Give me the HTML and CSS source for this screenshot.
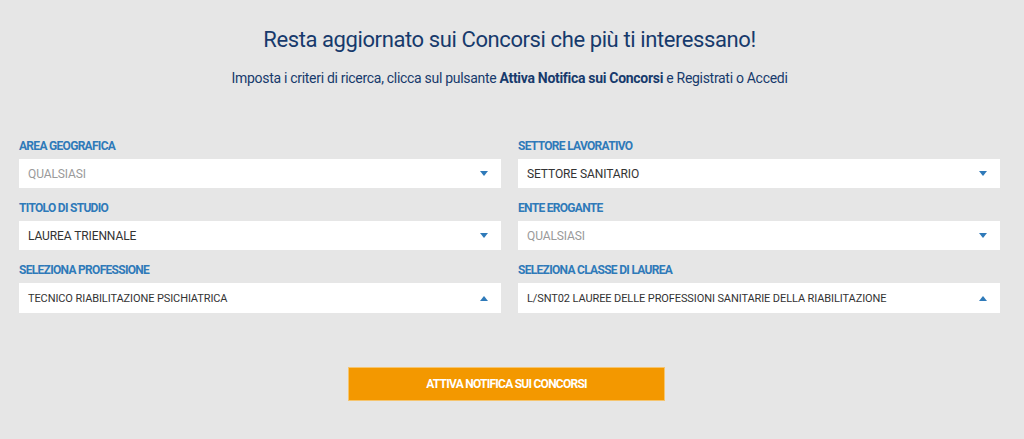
FILE: index.html
```html
<!DOCTYPE html>
<html lang="it">
<head>
<meta charset="utf-8">
<title>Notifiche Concorsi</title>
<link rel="stylesheet" href="styles.css">
</head>
<body>
<div class="page">
  <header class="intro">
    <h1 class="title">Resta aggiornato sui Concorsi che più ti interessano!</h1>
    <p class="subtitle">Imposta i criteri di ricerca, clicca sul pulsante <strong>Attiva Notifica sui Concorsi</strong> e Registrati o Accedi</p>
  </header>
  <form class="filters">
    <div class="field">
      <div class="label">AREA GEOGRAFICA</div>
      <div class="select placeholder"><span>QUALSIASI</span><span class="arrow down"></span></div>
    </div>
    <div class="field">
      <div class="label">SETTORE LAVORATIVO</div>
      <div class="select"><span>SETTORE SANITARIO</span><span class="arrow down"></span></div>
    </div>
    <div class="field">
      <div class="label">TITOLO DI STUDIO</div>
      <div class="select"><span>LAUREA TRIENNALE</span><span class="arrow down"></span></div>
    </div>
    <div class="field">
      <div class="label">ENTE EROGANTE</div>
      <div class="select placeholder"><span>QUALSIASI</span><span class="arrow down"></span></div>
    </div>
    <div class="field">
      <div class="label">SELEZIONA PROFESSIONE</div>
      <div class="select tall small"><span>TECNICO RIABILITAZIONE PSICHIATRICA</span><span class="arrow up"></span></div>
    </div>
    <div class="field">
      <div class="label">SELEZIONA CLASSE DI LAUREA</div>
      <div class="select tall small"><span>L/SNT02 LAUREE DELLE PROFESSIONI SANITARIE DELLA RIABILITAZIONE</span><span class="arrow up"></span></div>
    </div>
  </form>
  <div class="actions">
    <button type="button" class="btn">ATTIVA NOTIFICA SUI CONCORSI</button>
  </div>
</div>
</body>
</html>
```
FILE: styles.css
```css
html, body {
  margin: 0;
  padding: 0;
}
body {
  background: #e6e6e6;
  font-family: Roboto, "Liberation Sans", sans-serif;
  width: 1024px;
  height: 439px;
  overflow: hidden;
}
.page {
  padding: 24px 24px 0 19px;
}
.intro {
  text-align: center;
  color: #173a6c;
}
.title {
  margin: 0;
  font-size: 22px;
  font-weight: 400;
  line-height: 32px;
  letter-spacing: -0.4px;
}
.subtitle {
  margin: 13px 0 0;
  font-size: 14px;
  line-height: 18px;
  letter-spacing: -0.3px;
}
.subtitle strong {
  font-weight: 700;
}
.filters {
  margin-top: 52px;
  display: grid;
  grid-template-columns: 482px 482px;
  column-gap: 17px;
  row-gap: 13px;
}
.label {
  color: #2f7ab9;
  font-size: 12px;
  font-weight: 700;
  line-height: 14px;
  letter-spacing: -0.7px;
  margin-bottom: 6px;
}
.select {
  height: 29px;
  background: #fff;
  display: flex;
  align-items: center;
  justify-content: space-between;
  padding: 0 13px 0 9px;
  font-size: 12px;
  color: #333;
  letter-spacing: -0.1px;
}
.select.placeholder {
  color: #9a9a9a;
}
.select.tall {
  height: 30px;
}
.select.small {
  font-size: 11px;
}
.arrow {
  width: 0;
  height: 0;
  border-left: 4px solid transparent;
  border-right: 4px solid transparent;
}
.arrow.down {
  border-top: 5px solid #2f7ab9;
}
.arrow.up {
  border-bottom: 5px solid #2f7ab9;
}
.actions {
  display: flex;
  justify-content: center;
  margin-top: 54px;
  padding-right: 6px;
}
.btn {
  width: 317px;
  height: 34px;
  border: 1px solid #f6c56e;
  background: #f39800;
  color: #fff;
  font-family: Roboto, "Liberation Sans", sans-serif;
  font-size: 12px;
  font-weight: 700;
  letter-spacing: -0.75px;
}
```
